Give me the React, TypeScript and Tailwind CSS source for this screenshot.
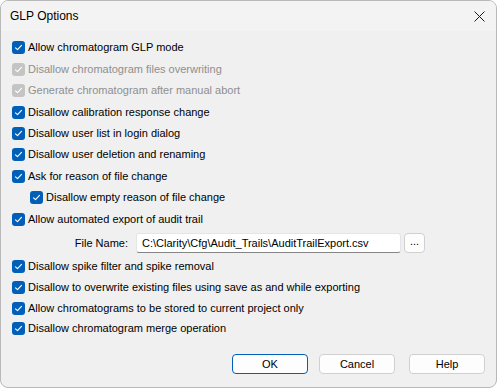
import React from "react";

type Opt = { label: string; disabled?: boolean; indent?: boolean };

const topOptions: Opt[] = [
  { label: "Allow chromatogram GLP mode" },
  { label: "Disallow chromatogram files overwriting", disabled: true },
  { label: "Generate chromatogram after manual abort", disabled: true },
  { label: "Disallow calibration response change" },
  { label: "Disallow user list in login dialog" },
  { label: "Disallow user deletion and renaming" },
  { label: "Ask for reason of file change" },
  { label: "Disallow empty reason of file change", indent: true },
  { label: "Allow automated export of audit trail" },
];

const bottomOptions: Opt[] = [
  { label: "Disallow spike filter and spike removal" },
  { label: "Disallow to overwrite existing files using save as and while exporting" },
  { label: "Allow chromatograms to be stored to current project only" },
  { label: "Disallow chromatogram merge operation" },
];

function Check({ disabled }: { disabled?: boolean }) {
  return (
    <span
      className={`flex h-[13px] w-[13px] shrink-0 items-center justify-center rounded-[3px] ${
        disabled ? "bg-[#c4c4c4]" : "bg-[#005fb8]"
      }`}
    >
      <svg width="9" height="9" viewBox="0 0 9 9" fill="none">
        <path d="M1.5 4.8 L3.5 6.7 L7.5 2.3" stroke="white" strokeWidth="1.1" strokeLinecap="round" strokeLinejoin="round" />
      </svg>
    </span>
  );
}

function Row({ opt, tall }: { opt: Opt; tall?: boolean }) {
  return (
    <div
      className={`flex items-center gap-[3px] ${tall ? "h-[21.4px]" : "h-[20.7px]"} ${
        opt.indent ? "pl-[18px]" : ""
      }`}
    >
      <Check disabled={opt.disabled} />
      <span className={opt.disabled ? "text-[#8f8f8f]" : "text-black"}>{opt.label}</span>
    </div>
  );
}

function Btn({ text, primary, className }: { text: string; primary?: boolean; className?: string }) {
  return (
    <button
      className={`h-[20px] w-[76px] rounded-[4px] bg-[#fdfdfd] text-black ${
        primary ? "border-[1.5px] border-[#005fb8]" : "border border-[#d0d0d0]"
      } ${className ?? ""}`}
    >
      {text}
    </button>
  );
}

export default function App() {
  return (
    <div
      className="flex h-[388px] w-[497px] flex-col overflow-hidden rounded-[8px] border border-[#b9b9b9] bg-[#f0f0f0] text-[11px] leading-none"
      style={{ fontFamily: '"Liberation Sans", Arial, sans-serif' }}
    >
      <div className="flex h-[30px] shrink-0 items-center justify-between bg-[#f3f3f3] pl-[9px] pr-[11px]">
        <span className="text-[12px] text-black">GLP Options</span>
        <svg width="11" height="11" viewBox="0 0 11 11">
          <path d="M0.5 0.5 L10.5 10.5 M10.5 0.5 L0.5 10.5" stroke="#1a1a1a" strokeWidth="1" />
        </svg>
      </div>
      <div className="flex flex-col pl-[11px] pt-[6.3px]">
        {topOptions.map((o) => (
          <Row key={o.label} opt={o} tall />
        ))}
        <div className="flex h-[26.6px] items-center">
          <span className="w-[116px] text-right">File Name:</span>
          <div className="ml-[8px] flex h-[20px] w-[265px] items-center rounded-[3px] border border-[#e5e5e5] border-b-[#868686] bg-white pl-[5px]">
            C:\Clarity\Cfg\Audit_Trails\AuditTrailExport.csv
          </div>
          <div className="ml-[3px] flex h-[20px] w-[21px] items-center justify-center rounded-[4px] border border-[#d0d0d0] bg-[#fdfdfd] pb-[4px]">
            ...
          </div>
        </div>
        {bottomOptions.map((o) => (
          <Row key={o.label} opt={o} />
        ))}
      </div>
      <div className="mt-auto flex justify-end pb-[13px] pr-[11px]">
        <Btn text="OK" primary className="mr-[11px]" />
        <Btn text="Cancel" className="mr-[14px]" />
        <Btn text="Help" />
      </div>
    </div>
  );
}
